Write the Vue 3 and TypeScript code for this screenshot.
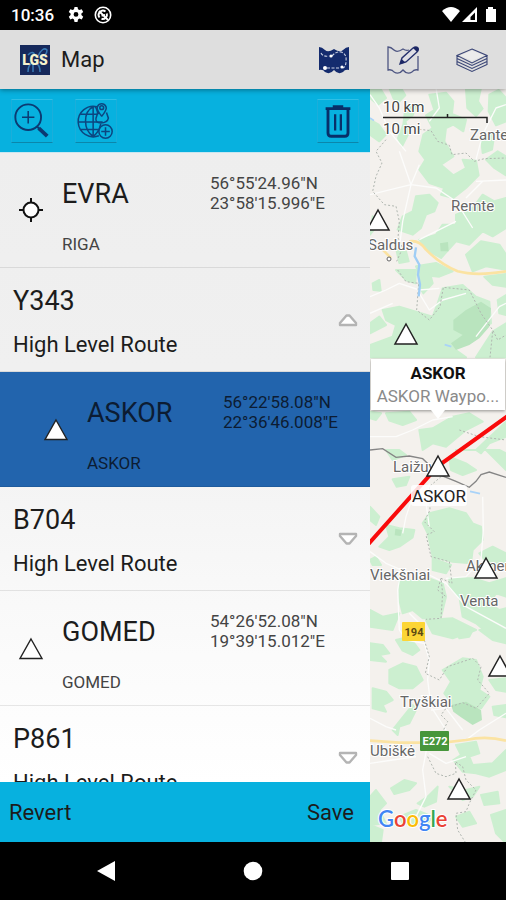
<script setup lang="ts">
import { ref } from 'vue'

interface Waypoint {
  kind: 'waypoint'
  name: string
  place: string
  lat: string
  lon: string
  symbol: 'fix' | 'triangle'
  nested?: boolean
}
interface Route {
  kind: 'route'
  name: string
  level: string
  open: boolean
}

const items = ref<(Waypoint | Route)[]>([
  { kind: 'waypoint', name: 'EVRA', place: 'RIGA', lat: '56°55\'24.96"N', lon: '23°58\'15.996"E', symbol: 'fix' },
  { kind: 'route', name: 'Y343', level: 'High Level Route', open: true },
  { kind: 'waypoint', name: 'ASKOR', place: 'ASKOR', lat: '56°22\'58.08"N', lon: '22°36\'46.008"E', symbol: 'triangle', nested: true },
  { kind: 'route', name: 'B704', level: 'High Level Route', open: false },
  { kind: 'waypoint', name: 'GOMED', place: 'GOMED', lat: '54°26\'52.08"N', lon: '19°39\'15.012"E', symbol: 'triangle' },
  { kind: 'route', name: 'P861', level: 'High Level Route', open: false },
])

// Terrain is stored as strips stacked from north to south.
interface Strip {
  y: number
  woods: string
  dense?: string
  roads: string
  borders: string
}
const strips: Strip[] = [
  {
    y: 0,
    woods:
      'M70 0L105 0L118 22L95 45L82 30ZM190 20L240 14L262 40L258 78L300 95L292 130L262 110L240 120L235 160L262 205L225 230L262 262L300 240L290 215L330 218L338 262L300 300L262 330L225 320L235 300L190 285L160 245L178 215L160 190L172 140L200 120L180 82L205 66ZM118 60L150 52L140 82L118 100L128 135L108 175L96 150L112 110ZM300 4L345 0L336 40L350 62L330 84L304 60ZM370 20L398 6L420 30L420 100L390 112L368 70ZM12 4L42 0L60 30L36 50L12 30ZM12 95L38 110L60 140L40 160L12 140ZM150 325L190 320L215 345L205 370L180 380L165 420L140 440L95 425L110 385L140 370ZM345 150L385 140L378 185L350 195ZM360 215L395 190L420 205L420 262L385 240ZM270 380L320 360L350 320L385 340L420 330L420 420L380 445L350 430L310 470L270 460L225 510L190 490L160 455L210 440L230 410L270 410ZM300 500L345 460L400 470L420 500L420 545L360 535L320 550ZM20 385L12 440L28 420ZM90 480L120 490L128 520L100 525ZM150 535L210 525L260 550L220 566L160 560Z',
    dense: 'M222 466L246 462L248 490L224 490Z',
    roads:
      'M12 20L40 60L70 130L120 190M135 290L210 300L270 340L320 420M210 0L220 60L190 100M330 215L350 140L390 60L420 50M100 190L135 290L110 400L100 480M330 280L420 276M270 400L160 455M350 280L300 330M12 320L135 290L160 230',
    borders: 'M160 124L195 128L215 160L250 172L258 200L300 195L325 220L355 212L420 210M60 155L30 190L48 225L30 265L20 310L55 350L90 355L100 400L96 450L110 480L92 520',
  },
  {
    y: 546,
    woods:
      'M90 0L150 0L148 40L120 30ZM230 55L290 45L330 80L370 95L375 160L330 180L300 220L262 235L300 262L12 262L12 225L80 200L90 165L60 150L50 120L100 110L150 125L200 140L215 100ZM160 5L190 2L200 40L172 70L160 50ZM355 20L420 12L420 50L380 44ZM395 90L420 75L420 135L400 130ZM12 160L40 140L60 165L12 190ZM380 185L420 160L420 262L330 262ZM60 430L130 425L150 450L110 465L70 452ZM12 425L45 430L30 450L12 445ZM160 480L200 475L260 440L310 430L350 455L300 480L240 530L200 520L170 540ZM330 540L420 455L420 500L370 520L345 550ZM20 40L40 30L44 62L22 60Z',
    dense: 'M262 150L300 120L345 95L375 115L370 170L340 205L310 225L270 240L255 220L290 195L262 180Z',
    roads: 'M12 80L60 60L100 40L160 60L220 55M12 500L90 500L140 480L200 450L260 440M160 70L190 120L230 90L300 70M12 130L80 100M330 200L400 110L420 100',
    borders: 'M95 0L120 35L158 40L152 120L190 150L222 110L232 52L310 60L345 130L380 180L395 210L420 195M380 185L372 262M280 480L340 500L420 510',
  },
  {
    y: 1086,
    woods:
      'M60 0L100 0L120 15L80 30ZM270 0L360 0L420 60L420 10L400 0ZM250 20L300 40L330 60L290 75L255 60ZM12 170L40 200L30 225L12 210ZM60 225L100 235L145 240L140 262L100 290L70 300L40 290L70 260ZM190 190L250 175L300 190L320 220L345 230L350 270L320 300L315 340L260 335L200 320L185 250L170 220ZM200 325L255 345L240 370L200 360ZM340 310L380 290L420 310L420 350L370 345ZM250 385L320 385L370 400L420 385L420 440L390 430L370 460L400 480L420 475L420 540L360 545L330 520L290 500L280 440L250 410ZM100 395L190 385L230 400L240 440L225 500L170 505L140 480L110 490L100 450ZM180 510L260 505L330 540L260 565L200 550ZM12 480L50 500L100 490L80 540L12 530ZM12 330L30 320L45 345L20 345ZM80 88L130 80L120 105L92 110Z',
    dense: 'M88 236L108 240L104 258L86 256Z',
    roads:
      'M12 305L60 340L130 370L190 375L240 400L300 470L420 535M110 250L120 200L140 140M105 360L95 420L100 540M350 140L352 240L345 330L400 370M240 385L300 380L345 330M130 490L160 520L110 560M190 100L180 160L190 230',
    borders: 'M225 80L190 110L192 180L175 215L205 245L180 255L195 320L250 335L258 400L225 385L230 430L225 505L180 508M225 385L215 420L240 440',
  },
  {
    y: 1626,
    woods:
      'M12 40L50 45L70 70L40 75L60 95L12 90ZM90 30L130 20L160 60L140 75L110 62ZM70 120L110 100L150 110L170 150L140 175L100 175L70 160ZM230 120L290 85L330 90L350 140L340 180L370 200L345 235L290 220L262 225L235 190L255 155ZM20 175L60 185L80 210L50 225L60 245L20 235ZM110 262L140 225L150 240L130 280L100 290L95 315L80 300ZM370 150L420 145L420 185L390 180ZM340 0L420 0L420 40L380 30ZM380 230L420 225L420 262L385 255ZM270 345L330 335L340 370L310 380L320 405L380 400L420 360L420 420L370 440L330 430L290 425L262 390L285 375ZM75 475L115 450L150 460L130 480L85 492ZM155 520L185 500L215 470L210 515L175 530ZM12 500L30 480L60 520L40 540L60 580L12 585ZM100 560L150 540L200 560L180 585L110 580ZM270 560L310 545L330 580L290 590ZM345 495L395 485L400 520L355 525ZM375 555L420 540L420 640L390 610ZM12 585L50 600L45 636L12 640ZM270 0L320 0L310 20L280 25ZM250 470L300 480L340 470L320 500L290 510Z',
    dense: 'M255 225L300 215L345 240L348 270L320 285L285 262L262 245Z',
    roads:
      'M100 0L120 30L175 40L190 90L185 150L195 230L240 300M12 265L60 290L90 300M185 340L170 420L180 500L150 560M195 240L240 235L290 300M300 330L340 300L420 250M12 400L80 390L150 380M300 380L240 400L190 370',
    borders:
      'M175 30L190 80L178 130L220 150L245 110L320 85L345 110L335 150L370 190L330 235L290 218L240 235L225 255L245 275L230 305M185 380L210 430L240 440L270 430L268 395L290 410L300 450L330 480L310 520L300 545L270 550L275 600L300 640',
  },
]

const labels = [
  { text: 'Zante', x: 100, y: 51 },
  { text: 'Remte', x: 81, y: 122 },
  { text: 'Saldus', x: -2, y: 161 },
  { text: 'Laižuva', x: 23, y: 383 },
  { text: 'Viekšniai', x: 0, y: 491 },
  { text: 'Akmenė', x: 96, y: 482 },
  { text: 'Venta', x: 90, y: 517 },
  { text: 'Tryškiai', x: 30, y: 618 },
  { text: 'Ubiškė', x: 0, y: 667 },
]

const markers = [
  { x: 8, y: 131 },
  { x: 36, y: 245 },
  { x: 68, y: 377 },
  { x: 116, y: 479 },
  { x: 130, y: 577 },
  { x: 89, y: 700 },
]

function toggle(item: Route) {
  item.open = !item.open
}
</script>

<template>
  <div class="screen">
    <div class="status">
      <span class="clock">10:36</span>
      <svg class="status-icon" viewBox="0 0 16 16" aria-hidden="true">
        <path
          fill="#fff"
          fill-rule="evenodd"
          d="M6.500 0h3l.5 2.300 1.400.8 2.300-.8 1.500 2.600-1.800 1.600v1.600l1.800 1.700-1.500 2.600-2.300-.8-1.400.8-.5 2.600h-3L6 12.400l-1.400-.8-2.300.8L.8 9.800l1.800-1.700V6.500L.8 4.900l1.500-2.600 2.300.8L6 2.300zM8 5a2.400 2.400 0 1 0 0 4.800A2.400 2.400 0 0 0 8 5z"
        />
      </svg>
      <svg class="status-icon second" viewBox="0 0 18 18" aria-hidden="true">
        <circle cx="9" cy="9" r="7.700" fill="none" stroke="#fff" stroke-width="1.600" />
        <path d="M5.500 11.500A4.300 4.300 0 0 1 11.500 5.500M12.800 7.500A4.300 4.300 0 0 1 7.500 12.800" fill="none" stroke="#fff" stroke-width="2" />
        <path d="M5 5l9 9M7.500 9.500L11 9" stroke="#fff" stroke-width="1.800" />
      </svg>
      <svg class="signals" viewBox="0 0 56 18" aria-hidden="true">
        <path d="M0 5Q9-3 18 5L9 16z" fill="#fff" />
        <path d="M20 16L35 1V16z" fill="#fff" />
        <path d="M28.500 11L33 6.500V14h-4.500z" fill="#000" />
        <path d="M46 1h5v2h3v13H44V3h2z" fill="#fff" />
      </svg>
    </div>

    <header class="appbar">
      <svg class="logo" viewBox="0 0 30 30" aria-hidden="true">
        <rect width="30" height="30" fill="#16295c" />
        <path d="M8 27Q8 18 14 18M13 27V19M20 27Q20 20 16 18M8 10Q13 4 16 12M18 11Q23 1 27 5Q27 10 21 13" fill="none" stroke="#387ab5" stroke-width="1.500" />
        <text x="15" y="20" text-anchor="middle" class="logo-text">LGS</text>
      </svg>
      <h1>Map</h1>
      <nav class="actions">
        <button type="button" aria-label="Route map">
          <svg viewBox="0 0 32 28">
            <path d="M1 1Q4 1 7 4Q10 7 16 3Q22 7 25 4Q28 1 31 1V24Q27 23 25 26Q20 29 16 24Q12 29 7 26Q5 23 1 24z" fill="#142b6e" />
            <path d="M3 7Q5 11 11 10M14 10Q18 5 23 6Q29 8 28 15Q28 21 25 22M21 22H8" fill="none" stroke="#cdd4e5" stroke-width="1.100" stroke-dasharray="3 1.500" />
            <circle cx="13" cy="10" r="1.600" fill="#fff" />
            <circle cx="7" cy="22" r="2" fill="#fff" />
            <circle cx="24" cy="21" r="1.600" fill="#fff" />
          </svg>
        </button>
        <button type="button" aria-label="Edit map">
          <svg viewBox="0 0 32 28">
            <path d="M22 4Q19 5 16 3Q10 7 7 4Q4 1 1 1V24Q5 23 7 26Q12 29 16 24Q20 29 25 26Q27 23 31 24V10" fill="none" stroke="#4d5582" stroke-width="1.300" />
            <path d="M13 18L15 12L26 2Q29 0 31 2Q32 4 30 6L19 16z" fill="#dfdfe5" stroke="#25306c" stroke-width="1.400" />
            <path d="M13 18l1.500-5 4 3.500zM26 2Q29 0 31 2Q32 4 30 6z" fill="#1c2765" />
          </svg>
        </button>
        <button type="button" aria-label="Layers">
          <svg viewBox="0 0 32 28">
            <path d="M16 3L31 9.500L16 17L1 9.500zM1 12.500L16 19.500L31 12.500M1 15.500L16 22.500L31 15.500M1 18.500L16 25.500L31 18.500M1 9.500V19M31 9.500V19" fill="none" stroke="#3b4677" stroke-width="1.100" />
            <path d="M16 4.500L28 9.500L16 15L4 9.500z" fill="#ececec" />
          </svg>
        </button>
      </nav>
    </header>

    <main class="content">
      <section class="panel">
        <div class="tools">
          <button type="button" aria-label="Search and add">
            <svg viewBox="0 0 42 42" fill="none" stroke="#0c3a72" stroke-width="2">
              <circle cx="17" cy="17" r="13.500" />
              <path d="M17 10.500v13M10.500 17h13" stroke-width="1.600" />
              <path d="M26.500 27l3 3" />
              <path d="M28 28.500l9 8.500" stroke-width="4" />
            </svg>
          </button>
          <button type="button" aria-label="Add from map">
            <svg viewBox="0 0 42 42" fill="none" stroke="#0c4680" stroke-width="1.600">
              <path d="M22 6A16 16 0 1 0 24 36.500M18 6Q10 10 10 21Q10 32 18 37M18 6V37M20 6Q22 8 23 14M26 24Q24 33 18 37M5 14H23M3 22H28M5 30H23" />
              <path d="M27 16Q21 9 22.500 6Q24 3 27 3Q30 3 31.500 6Q33 9 27 16M23 12l-2 6Q20 23 26 23Q33 23 34 18L32 12" />
              <circle cx="27" cy="7" r="2" />
              <circle cx="31" cy="32" r="7" fill="#07b1df" />
              <path d="M31 27.500v9M26.500 32h9" />
            </svg>
          </button>
          <button type="button" class="last" aria-label="Delete">
            <svg viewBox="0 0 42 42" fill="none" stroke="#082f69" stroke-width="3">
              <path d="M8 8H34M17 7.500V6h8v1.500" />
              <path d="M10.500 9v24.500Q10.500 37 14 37H28Q31.500 37 31.500 33.500V9" />
              <path d="M18 14v17M24 14v17" stroke-width="2.400" />
            </svg>
          </button>
        </div>

        <ul class="list">
          <li v-for="item in items" :key="item.name">
            <button v-if="item.kind === 'waypoint'" type="button" class="waypoint" :class="{ nested: item.nested }">
              <svg v-if="item.symbol === 'fix'" class="symbol" viewBox="0 0 26 26" aria-hidden="true">
                <circle cx="13" cy="13" r="7.500" fill="#fff" stroke="#111" stroke-width="2" />
                <path d="M13 1v5M13 20v5M1 13h5M20 13h5" stroke="#111" stroke-width="2" />
              </svg>
              <svg v-else class="symbol" viewBox="0 0 26 26" aria-hidden="true">
                <path d="M13 4L24 23.500H2z" fill="#fff" stroke="#222" stroke-width="1.400" />
              </svg>
              <span class="names">
                <span class="name">{{ item.name }}</span>
                <span class="place">{{ item.place }}</span>
              </span>
              <span class="position">
                <span>{{ item.lat }}</span>
                <span>{{ item.lon }}</span>
              </span>
            </button>
            <button v-else type="button" class="route" :aria-expanded="item.open" @click="toggle(item)">
              <span class="heading">
                <span class="name">{{ item.name }}</span>
                <span class="level">{{ item.level }}</span>
              </span>
              <svg class="chevron" :class="{ open: item.open }" viewBox="0 0 20 14" aria-hidden="true">
                <path d="M2 2H18V4L11.500 11.500H8.500L2 4z" fill="#fff" stroke="#b4b4b4" stroke-width="2.400" stroke-linejoin="round" />
              </svg>
            </button>
          </li>
        </ul>

        <footer class="commit">
          <button type="button">Revert</button>
          <button type="button">Save</button>
        </footer>
      </section>

      <section class="map" aria-label="Map">
        <svg class="chart" viewBox="0 0 136 753" preserveAspectRatio="xMinYMin slice">
          <g transform="translate(-4 -1) scale(0.33333)">
            <g v-for="strip in strips" :key="strip.y" :transform="`translate(0 ${strip.y})`">
              <path :d="strip.woods" class="woods" />
              <path v-if="strip.dense" :d="strip.dense" class="dense" />
            </g>
            <g v-for="strip in strips" :key="strip.y" :transform="`translate(0 ${strip.y})`" fill="none">
              <path :d="strip.roads" class="road" />
              <path :d="strip.borders" class="district" />
            </g>
            <g fill="none">
              <path d="M150 478L146 505L160 530L156 560L162 590L158 625" stroke="#9fcdf5" stroke-width="7" />
              <path d="M12 90L24 98M236 770L256 776M312 1210L342 1217" stroke="#a9d3f8" stroke-width="5" />
              <path d="M130 460Q160 455 180 485Q225 530 275 550Q330 565 420 550" class="highway" />
              <path d="M50 485L75 510" class="highway" />
              <path d="M12 1958L100 1964L230 1964L300 1956Q360 1942 420 1958" class="highway" />
              <path d="M12 1086L50 1082L90 1108L130 1104L170 1112L220 1160L270 1180L310 1198L330 1180L345 1160L370 1152L420 1168" class="country" />
            </g>
          </g>

          <text v-for="label in labels" :key="label.text" :x="label.x" :y="label.y" class="label">{{ label.text }}</text>
          <circle cx="19" cy="170" r="2" fill="#fff" stroke="#666" />

          <rect x="32" y="533" width="23" height="19" rx="1" fill="#fcd535" />
          <text x="44" y="547" class="shield yellow">194</text>
          <rect x="50" y="642" width="29" height="20" rx="1" fill="#47963b" />
          <text x="65" y="656" class="shield green">E272</text>

          <path d="M-6 460L68 377L142 324" fill="none" stroke="#f90b0b" stroke-width="4" />
          <rect x="41" y="396" width="56" height="21" rx="3" fill="#fff" fill-opacity="0.85" />
          <text x="69" y="413" class="caption">ASKOR</text>

          <path
            v-for="(marker, i) in markers"
            :key="i"
            :d="`M${marker.x} ${marker.y - 10}l11 20h-22z`"
            fill="#fff"
            stroke="#222"
            stroke-width="1.500"
          />

          <text x="13" y="23" class="scale">10 km</text>
          <text x="13" y="45" class="scale">10 mi</text>
          <path d="M13 28.500H117V34M77.500 28V25" fill="none" stroke="#222" stroke-width="1.500" />

          <text x="8" y="738" class="google"><tspan fill="#4285f4">G</tspan><tspan fill="#ea4335">o</tspan><tspan fill="#fbbc05">o</tspan><tspan fill="#4285f4">g</tspan><tspan fill="#34a853">l</tspan><tspan fill="#ea4335">e</tspan></text>
        </svg>

        <div class="callout">
          <strong>ASKOR</strong>
          <span>ASKOR Waypo...</span>
        </div>
      </section>
    </main>

    <nav class="system">
      <button type="button" aria-label="Back">
        <svg viewBox="0 0 22 22"><path d="M20 1V21L2 11z" fill="#fff" /></svg>
      </button>
      <button type="button" aria-label="Home">
        <svg viewBox="0 0 22 22"><circle cx="11" cy="11" r="9.300" fill="#fff" /></svg>
      </button>
      <button type="button" aria-label="Recent apps">
        <svg viewBox="0 0 22 22"><rect x="2" y="2" width="18" height="18" rx="1" fill="#fff" /></svg>
      </button>
    </nav>
  </div>
</template>

<style>
body {
  margin: 0;
  background: #000;
}
</style>

<style scoped>
.screen {
  display: flex;
  flex-direction: column;
  height: 100vh;
  font-family: Roboto, "Liberation Sans", sans-serif;
  color: #1c1c1c;
}
.screen * {
  box-sizing: border-box;
}
button {
  margin: 0;
  padding: 0;
  border: 0;
  background: none;
  color: inherit;
  font: inherit;
  text-align: left;
  cursor: pointer;
}
svg {
  display: block;
}

.status {
  display: flex;
  align-items: center;
  flex: none;
  height: 30px;
  padding: 0 8px 0 11px;
  background: #000;
  color: #fff;
}
.clock {
  font-size: 17px;
  font-weight: 500;
  line-height: 32px;
}
.status-icon {
  width: 16px;
  height: 16px;
  margin-left: 14px;
}
.status-icon.second {
  width: 18px;
  height: 18px;
  margin-left: 10px;
}
.signals {
  width: 56px;
  height: 18px;
  margin-left: auto;
}

.appbar {
  position: relative;
  z-index: 1;
  display: flex;
  align-items: center;
  flex: none;
  height: 59px;
  padding-left: 20px;
  background: #dedede;
  box-shadow: 0 1px 5px rgba(0, 0, 0, 0.4);
}
.logo {
  width: 30px;
  height: 30px;
}
.logo-text {
  font-size: 14px;
  font-weight: 900;
  fill: #f5f2cd;
}
h1 {
  margin: 0 0 0 11px;
  font-size: 22px;
  font-weight: 400;
  line-height: 30px;
}
.actions {
  display: flex;
  margin-left: auto;
}
.actions button {
  display: flex;
  align-items: center;
  justify-content: center;
  width: 69px;
  height: 59px;
}
.actions svg {
  width: 32px;
  height: 28px;
}

.content {
  display: grid;
  grid-template-columns: 370fr 136fr;
  flex: 1;
  min-height: 0;
}
.panel {
  display: flex;
  flex-direction: column;
  min-width: 0;
  min-height: 0;
}
.tools {
  display: flex;
  align-items: center;
  flex: none;
  gap: 22px;
  height: 64px;
  padding: 0 11px;
  background: #07b1df;
  border-bottom: 1px solid #c9e6f0;
}
.tools button {
  width: 42px;
  height: 44px;
  border: 1px solid #1baeda;
  border-top-color: #30bfe5;
  border-bottom-color: #0b86ab;
}
.tools .last {
  margin-left: auto;
}
.tools svg {
  width: 40px;
  height: 42px;
}

.list {
  flex: 1;
  min-height: 0;
  margin: 0;
  padding: 0;
  overflow: hidden;
  list-style: none;
  background: linear-gradient(#eeeeee, #f0f0f0 34%, #f5f5f5 56%, #fbfbfb 80%, #ffffff);
}
.waypoint,
.route {
  width: 100%;
  border-bottom: 1px solid rgba(0, 0, 0, 0.09);
}
.waypoint {
  display: grid;
  grid-template-columns: 62px 148fr 160fr;
  height: 115px;
}
.waypoint.nested {
  padding-left: 25px;
  background: #2264ad;
}
.symbol {
  width: 26px;
  height: 26px;
  margin: 44px 0 0 18px;
}
.names,
.name,
.place,
.level,
.position span {
  display: block;
}
.names {
  padding-top: 23px;
}
.name {
  font-size: 27px;
  line-height: 36px;
}
.place {
  margin-top: 22px;
  font-size: 17px;
  line-height: 20px;
  color: #444;
}
.position {
  padding-top: 20px;
  font-size: 17px;
  line-height: 20px;
  white-space: nowrap;
  color: #444;
}
.nested .name,
.nested .place,
.nested .position {
  color: #0c1c33;
}
.route {
  display: flex;
  align-items: center;
  justify-content: space-between;
  height: 104px;
  padding: 0 12px 0 13px;
}
.heading {
  padding-top: 3px;
}
.level {
  margin-top: 12px;
  font-size: 22px;
  line-height: 28px;
}
.chevron {
  width: 20px;
  height: 14px;
}
.chevron.open {
  transform: rotate(180deg);
}

.commit {
  display: flex;
  justify-content: space-between;
  flex: none;
  height: 60px;
  padding: 0 16px 0 9px;
  background: #07b1df;
}
.commit button {
  font-size: 22px;
}

.map {
  position: relative;
  overflow: hidden;
  min-width: 0;
  background: #f4f1ed;
}
.chart {
  width: 100%;
  height: 100%;
}
.woods {
  fill: #ccefd0;
  stroke: #ccefd0;
  stroke-width: 6px;
  stroke-linejoin: round;
}
.dense {
  fill: #b9e4be;
}
.road {
  stroke: #fcfcfb;
  stroke-width: 4px;
  stroke-linejoin: round;
}
.district {
  stroke: #b0b6b0;
  stroke-width: 3px;
  stroke-dasharray: 6 6;
}
.highway {
  stroke: #fbe3a2;
  stroke-width: 8px;
}
.country {
  stroke: #858585;
  stroke-width: 4px;
}
.label {
  font-size: 15px;
  fill: #666666;
  stroke: #ffffff;
  stroke-width: 2px;
  paint-order: stroke;
}
.scale {
  font-size: 15px;
  fill: #444444;
  stroke: #ffffff;
  stroke-width: 2px;
  paint-order: stroke;
}
.caption {
  font-size: 17px;
  fill: #222222;
  text-anchor: middle;
}
.shield {
  font-size: 11px;
  font-weight: 700;
  text-anchor: middle;
}
.yellow {
  fill: #5c4a12;
}
.green {
  fill: #ffffff;
}
.google {
  font-family: Lato, sans-serif;
  font-size: 22px;
  font-weight: 600;
  stroke: #ffffff;
  stroke-width: 2px;
  paint-order: stroke;
}

.callout {
  position: absolute;
  top: 270px;
  left: 1px;
  right: 1px;
  height: 51px;
  padding: 3px 5px;
  background: #fff;
  box-shadow: 0 1px 3px rgba(0, 0, 0, 0.4);
  font-size: 17px;
  line-height: 23px;
  text-align: center;
}
.callout::after {
  content: "";
  position: absolute;
  top: 100%;
  left: 50%;
  margin-left: -7px;
  border: 7px solid transparent;
  border-top: 9px solid #fff;
  border-bottom: 0;
}
.callout strong,
.callout span {
  display: block;
  overflow: hidden;
  white-space: nowrap;
  text-overflow: ellipsis;
}
.callout strong {
  color: #111;
}
.callout span {
  color: #8a8a8a;
}

.system {
  display: grid;
  grid-template-columns: repeat(3, 1fr);
  flex: none;
  height: 58px;
  padding: 0 33px;
  background: #000;
}
.system button {
  display: flex;
  align-items: center;
  justify-content: center;
}
.system svg {
  width: 22px;
  height: 22px;
}
</style>
